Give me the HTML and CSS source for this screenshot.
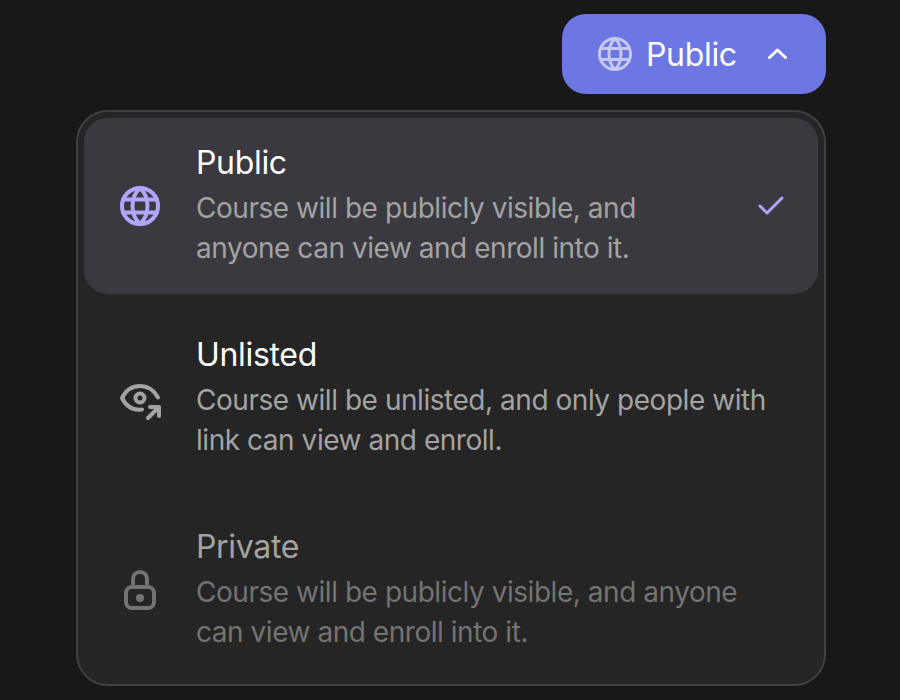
FILE: index.html
```html
<!DOCTYPE html>
<html lang="en">
<head>
<meta charset="utf-8">
<title>Visibility</title>
<link rel="stylesheet" href="styles.css">
</head>
<body>
<main class="page">
  <button class="trigger" type="button">
    <svg class="trigger-globe" viewBox="0 0 34 34" aria-hidden="true">
      <circle cx="17" cy="17" r="15.5"/>
      <path d="M2.500 11.500H31.500M2.500 22.500H31.500M17 1.500C9 9 9 25 17 32.500M17 1.500C25 9 25 25 17 32.500"/>
    </svg>
    <span class="trigger-label">Public</span>
    <svg class="trigger-chevron" viewBox="0 0 22 14" aria-hidden="true"><path d="M1.500 10.500L9.500 3L17.500 10.500"/></svg>
  </button>
  <section class="panel">
    <div class="option selected">
      <svg class="option-icon globe" viewBox="0 0 40 40" aria-hidden="true">
        <circle cx="20" cy="20" r="18"/>
        <path d="M3 13.500H37M3 26.500H37M20 2C10 11 10 29 20 38M20 2C30 11 30 29 20 38"/>
      </svg>
      <div class="option-text">
        <div class="option-title">Public</div>
        <div class="option-desc">Course will be publicly visible, and<br>anyone can view and enroll into it.</div>
      </div>
      <svg class="check" viewBox="0 0 26 20" aria-hidden="true"><path d="M2 10L9 17L24 2"/></svg>
    </div>
    <div class="option">
      <svg class="option-icon eye" viewBox="0 0 40 40" aria-hidden="true">
        <path d="M22 31.500C13 32.500 6 28 2 20C6 12 12.500 8 20 8C28 8 34 12 38 19.500"/>
        <circle cx="20" cy="20" r="4.500"/>
        <path d="M28 40L39 29M30 29H39V38"/>
      </svg>
      <div class="option-text">
        <div class="option-title">Unlisted</div>
        <div class="option-desc">Course will be unlisted, and only people with<br>link can view and enroll.</div>
      </div>
    </div>
    <div class="option disabled">
      <svg class="option-icon lock" viewBox="0 0 40 40" aria-hidden="true">
        <rect x="6" y="17" width="28" height="21" rx="6"/>
        <path d="M13 17V9C13 5 16 2 20 2C24 2 27 5 27 9V17"/>
        <circle class="lock-dot" cx="20" cy="28" r="4"/>
      </svg>
      <div class="option-text">
        <div class="option-title">Private</div>
        <div class="option-desc">Course will be publicly visible, and anyone<br>can view and enroll into it.</div>
      </div>
    </div>
  </section>
</main>
</body>
</html>
```
FILE: styles.css
```css
* { box-sizing: border-box; }
html, body { margin: 0; height: 100%; }
body {
  background: #181818;
  font-family: Inter, "Liberation Sans", sans-serif;
  overflow: hidden;
}
.page {
  display: flex;
  flex-direction: column;
  align-items: flex-end;
  gap: 16px;
  padding: 14px 74px 0 76px;
}
.trigger {
  display: flex;
  align-items: center;
  width: 264px;
  height: 80px;
  padding: 0 36px;
  border: 0;
  border-radius: 24px;
  background: #6d77e3;
  color: #fff;
  font: 400 32px/40px Inter, "Liberation Sans", sans-serif;
  letter-spacing: -0.32px;
}
.trigger-globe { width: 34px; height: 34px; flex: none; fill: none; stroke: #c5c9f4; stroke-width: 3; }
.trigger-label { margin-left: 14px; padding-top: 2px; }
.trigger-chevron { width: 22px; height: 14px; margin-left: auto; fill: none; stroke: #fff; stroke-width: 3; stroke-linecap: round; stroke-linejoin: round; }
.panel {
  width: 750px;
  display: flex;
  flex-direction: column;
  gap: 16px;
  padding: 6px;
  background: #252525;
  border: 2px solid #404040;
  border-radius: 32px;
}
.option {
  display: flex;
  align-items: center;
  height: 176px;
  padding: 0 34px 0 36px;
  border-radius: 24px;
}
.option.selected { background: #39393f; }
.option-icon { width: 40px; height: 40px; flex: none; fill: none; stroke-width: 4; stroke-linecap: round; stroke-linejoin: round; overflow: visible; }
.globe { stroke: #b0a6ff; stroke-width: 4; }
.eye { stroke: #a3a3a3; }
.lock { stroke: #737373; }
.lock-dot { fill: #737373; stroke: none; }
.option-text { flex: 1; margin-left: 36px; padding-bottom: 1px; }
.option-title { color: #fff; font-size: 32px; line-height: 40px; font-weight: 400; letter-spacing: -0.32px; margin-bottom: 5px; }
.option-desc { color: #a3a3a3; font-size: 28px; line-height: 40px; letter-spacing: -0.46px; }
.check { width: 26px; height: 20px; flex: none; fill: none; stroke: #b0a6ff; stroke-width: 3; stroke-linecap: round; stroke-linejoin: round; }
.disabled .option-title { color: #a3a3a3; }
.disabled .option-desc { color: #737373; }
```
